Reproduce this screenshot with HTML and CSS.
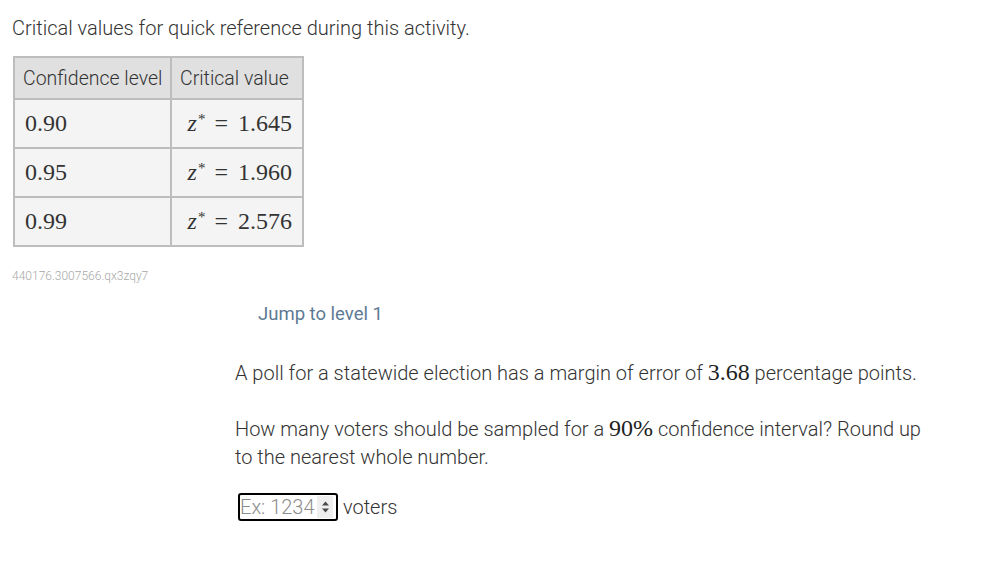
FILE: index.html
```html
<!DOCTYPE html>
<html>
<head>
<meta charset="utf-8">
<link rel="stylesheet" href="styles.css">
</head>
<body>
<div class="page">
  <p class="intro">Critical values for quick reference during this activity.</p>
  <table class="cv">
    <thead>
      <tr><th>Confidence level</th><th>Critical value</th></tr>
    </thead>
    <tbody>
      <tr><td class="m">0.90</td><td class="m r"><i>z</i><sup>*</sup><span class="eq">=</span>1.645</td></tr>
      <tr><td class="m">0.95</td><td class="m r"><i>z</i><sup>*</sup><span class="eq">=</span>1.960</td></tr>
      <tr><td class="m">0.99</td><td class="m r"><i>z</i><sup>*</sup><span class="eq">=</span>2.576</td></tr>
    </tbody>
  </table>
  <div class="code">440176.3007566.qx3zqy7</div>
  <div class="activity">
    <div class="jump">Jump to level 1</div>
    <p class="q">A poll for a statewide election has a margin of error of <span class="mm">3.68</span> percentage points.</p>
    <p class="q">How many voters should be sampled for a <span class="mm">90%</span> confidence interval? Round up to the nearest whole number.</p>
    <div class="answer">
      <div class="field">
        <input type="text" placeholder="Ex: 1234">
        <span class="spin"><svg width="9" height="14" viewBox="0 0 9 14"><path d="M4.5 1.5 L8 5.5 H1 Z M4.5 12.5 L8 8.5 H1 Z" fill="#4a4a4a"/></svg></span>
      </div>
      <span class="unit">voters</span>
    </div>
  </div>
</div>
</body>
</html>
```
FILE: styles.css
```css
html, body { margin: 0; padding: 0; background: #fff; }
body { font-family: Roboto, "Liberation Sans", sans-serif; font-weight: 300; color: #333; }
.page { padding: 14px 0 0 12px; }
.intro { margin: 0; font-size: 20px; line-height: 28px; }
.cv { margin-top: 14px; margin-left: 1px; border-collapse: collapse; border: 2px solid #bdbdbd; }
.cv th, .cv td { border: 2px solid #bdbdbd; text-align: left; }
.cv th { background: #e0e0e0; font-weight: 300; font-size: 19.5px; height: 40px; padding: 0 8px; white-space: nowrap; }
.cv td { background: #f4f4f4; height: 47px; padding: 0 10px; }
.cv th:first-child { width: 140px; padding-right: 7px; }
.cv th:last-child { width: 112px; padding-right: 10px; }
.m { font-family: "Liberation Serif", "DejaVu Serif", serif; font-weight: 400; font-size: 24px; color: #333; }
.r { text-align: right !important; }
.m i { font-style: italic; }
.m sup { font-size: 15px; vertical-align: 7px; line-height: 0; margin-left: 1px; }
.eq { margin: 0 10px 0 9px; }
.code { margin-top: 22px; font-size: 12px; color: #a8a8a8; }
.activity { margin-left: 223px; }
.jump { margin-top: 20px; margin-left: 23px; font-size: 18.5px; font-weight: 400; color: #5e7a94; }
.q { margin: 0; font-size: 20px; line-height: 28px; width: 690px; margin-top: 34px; }
.q + .q { margin-top: 28px; }
.mm { font-family: "Liberation Serif", "DejaVu Serif", serif; font-size: 24px; line-height: 1; font-weight: 400; color: #222; }
.answer { display: flex; align-items: center; gap: 5px; margin-top: 22px; margin-left: 3px; }
.field { display: flex; align-items: center; width: 96px; height: 24px; border: 2px solid #000; border-radius: 3px; }
.field input { border: 0; outline: 0; width: 77px; padding: 0; font-family: Roboto, sans-serif; font-weight: 300; font-size: 20px; background: transparent; }
.field input::placeholder { color: #8c8c8c; }
.spin { display: flex; align-items: center; justify-content: center; width: 16px; height: 22px; background: #efefef; }
.unit { font-size: 20px; }
```
